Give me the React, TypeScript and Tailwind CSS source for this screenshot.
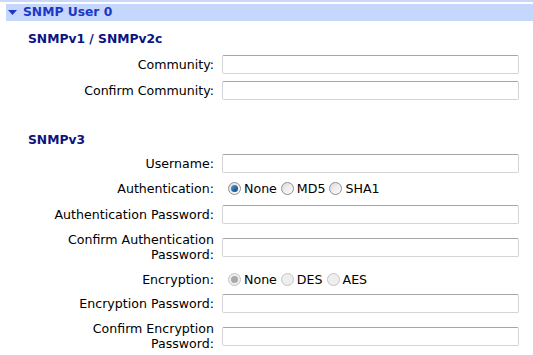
import React from 'react';

const font = { fontFamily: '"DejaVu Sans", Verdana, sans-serif' };

function Radio({ checked, disabled }: { checked?: boolean; disabled?: boolean }) {
  return (
    <span
      className={`inline-flex items-center justify-center w-[13px] h-[13px] rounded-full border ${
        disabled ? 'border-[#c4c4c4] bg-[#eeeeee]' : 'border-[#8e8f8f] bg-gradient-to-br from-[#dcdcdc] to-white'
      }`}
    >
      {checked && (
        <span
          className={`w-[7px] h-[7px] rounded-full ${
            disabled ? 'bg-[#a9a9a9]' : 'bg-gradient-to-br from-[#4fa0dc] to-[#0b3f78]'
          }`}
        />
      )}
    </span>
  );
}

function Field({ label, h = 'h-[26px]' }: { label: React.ReactNode; h?: string }) {
  return (
    <div className={`flex items-center ${h}`}>
      <div className="w-[215px] text-right leading-[15px] pr-[1px]">{label}</div>
      <div className="ml-[7px] w-[297px] h-[19px] bg-white border border-[#d4d4d8] border-t-[#a6a6aa] rounded-[2px]" />
    </div>
  );
}

function RadioRow({ label, options, disabled, h = 'h-[26px]' }: { label: string; options: string[]; disabled?: boolean; h?: string }) {
  return (
    <div className={`flex items-center ${h}`}>
      <div className="w-[215px] text-right pr-[1px]">{label}</div>
      <div className="ml-[13px] flex items-center">
        {options.map((o, i) => (
          <span key={o} className="flex items-center mr-[4px]">
            <Radio checked={i === 0} disabled={disabled} />
            <span className="ml-[3px]">{o}</span>
          </span>
        ))}
      </div>
    </div>
  );
}

export default function App() {
  return (
    <div className="w-[533px] h-[355px] bg-white overflow-hidden text-[12.6px] text-black" style={font}>
      <div className="h-[2px] bg-[#c7d8fb]" />
      <div className="mt-[2px] ml-[6px] h-[17px] bg-[#c5d7fd] flex items-center">
        <svg width="9" height="6" viewBox="0 0 9 6" className="ml-[2px]">
          <polygon points="0,0 9,0 4.5,5" fill="#1b37c4" />
        </svg>
        <span className="ml-[6px] font-bold text-[#1b37c4] text-[12.3px]">SNMP User 0</span>
      </div>

      <div className="mt-[8px] h-[20px] leading-[20px] pl-[28px] font-bold text-[#0c1480] text-[12.3px]">SNMPv1 / SNMPv2c</div>
      <div className="mt-[2px]">
        <Field label="Community:" />
        <Field label="Confirm Community:" />
      </div>

      <div className="mt-[27px] h-[20px] leading-[20px] pl-[28px] font-bold text-[#0c1480] text-[12.3px]">SNMPv3</div>
      <div>
        <Field label="Username:" />
        <RadioRow label="Authentication:" options={['None', 'MD5', 'SHA1']} />
        <Field label="Authentication Password:" h="h-[24px]" />
        <Field
          label={
            <>
              Confirm Authentication
              <br />
              Password:
            </>
          }
          h="h-[42px]"
        />
        <RadioRow label="Encryption:" options={['None', 'DES', 'AES']} disabled h="h-[24px]" />
        <Field label="Encryption Password:" h="h-[22px]" />
        <Field
          label={
            <>
              Confirm Encryption
              <br />
              Password:
            </>
          }
          h="h-[44px]"
        />
      </div>
    </div>
  );
}
